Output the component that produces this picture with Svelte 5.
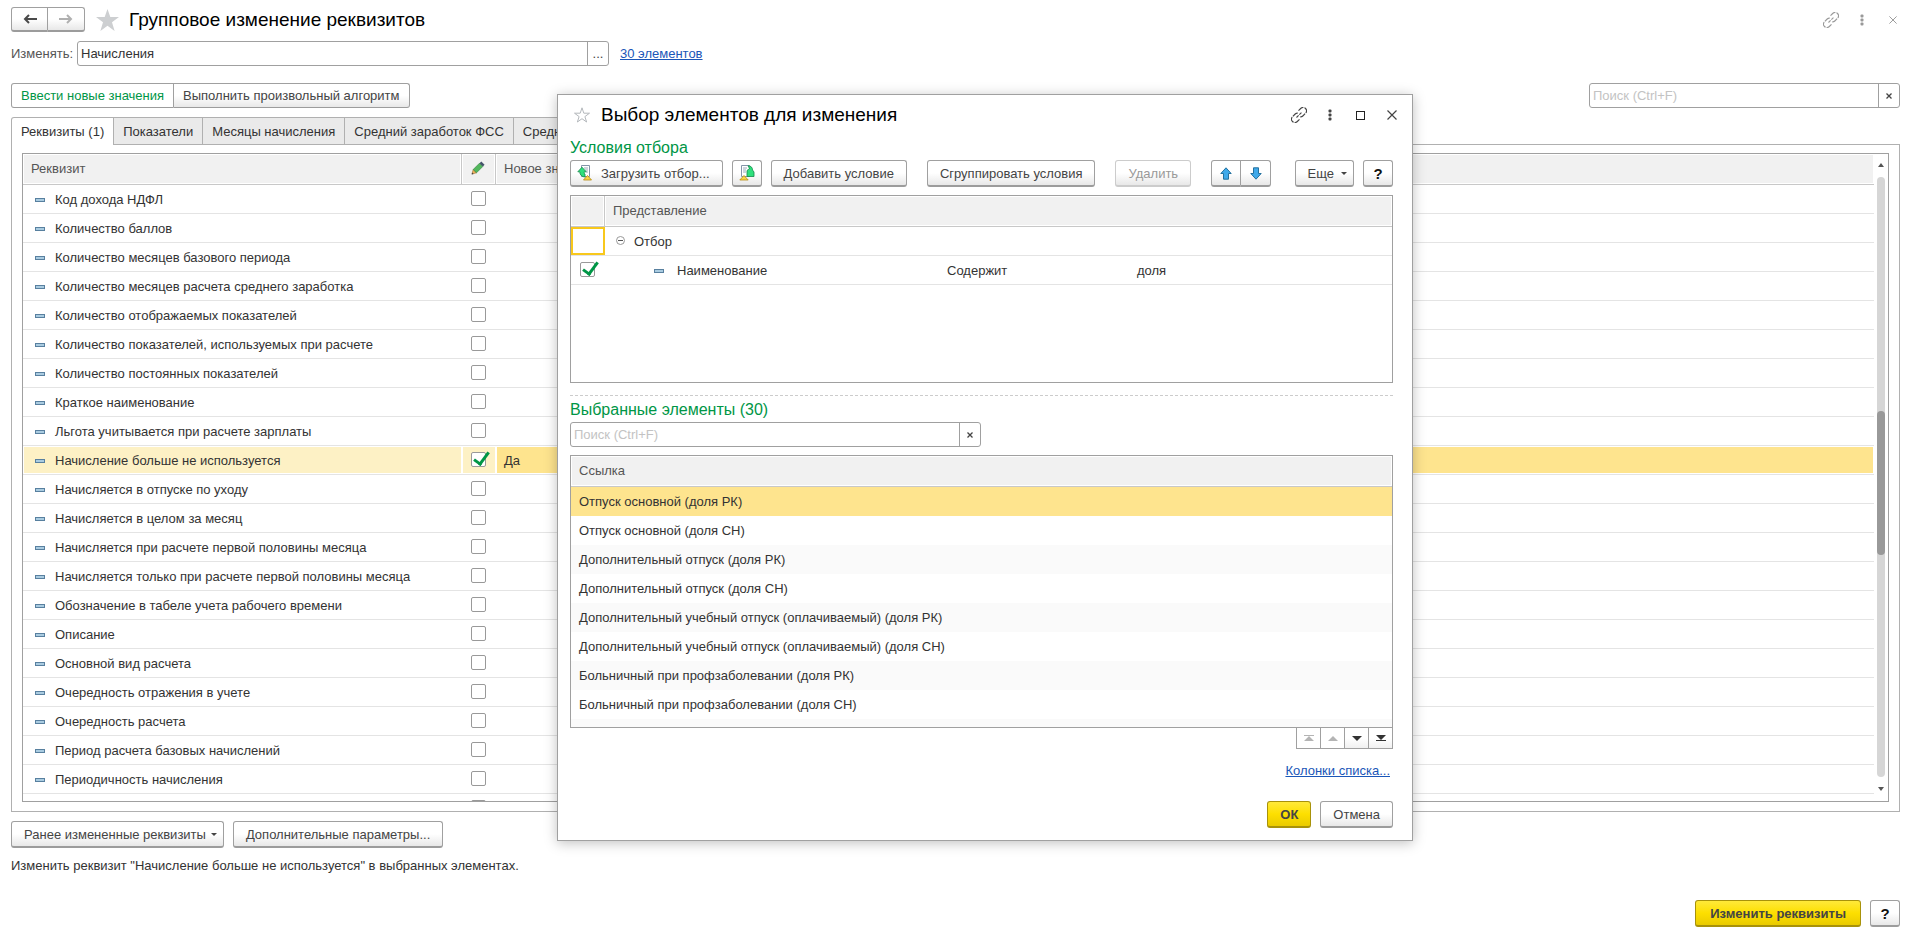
<script>
  let attrs = $state([
    { name: "Код дохода НДФЛ" },
    { name: "Количество баллов" },
    { name: "Количество месяцев базового периода" },
    { name: "Количество месяцев расчета среднего заработка" },
    { name: "Количество отображаемых показателей" },
    { name: "Количество показателей, используемых при расчете" },
    { name: "Количество постоянных показателей" },
    { name: "Краткое наименование" },
    { name: "Льгота учитывается при расчете зарплаты" },
    { name: "Начисление больше не используется", checked: true, value: "Да" },
    { name: "Начисляется в отпуске по уходу" },
    { name: "Начисляется в целом за месяц" },
    { name: "Начисляется при расчете первой половины месяца" },
    { name: "Начисляется только при расчете первой половины месяца" },
    { name: "Обозначение в табеле учета рабочего времени" },
    { name: "Описание" },
    { name: "Основной вид расчета" },
    { name: "Очередность отражения в учете" },
    { name: "Очередность расчета" },
    { name: "Период расчета базовых начислений" },
    { name: "Периодичность начисления" },
    { name: "" },
  ]);

  const tabs = ["Реквизиты (1)", "Показатели", "Месяцы начисления", "Средний заработок ФСС", "Средний заработок"];
  let activeTab = $state(0);

  const items = [
    "Отпуск основной (доля РК)",
    "Отпуск основной (доля СН)",
    "Дополнительный отпуск (доля РК)",
    "Дополнительный отпуск (доля СН)",
    "Дополнительный учебный отпуск (оплачиваемый) (доля РК)",
    "Дополнительный учебный отпуск (оплачиваемый) (доля СН)",
    "Больничный при профзаболевании (доля РК)",
    "Больничный при профзаболевании (доля СН)",
  ];
  let selectedItem = $state(0);
  let object = $state("Начисления");
  let conditionOn = $state(true);
</script>

{#snippet linkIcon()}
  <svg width="16" height="16" viewBox="0 0 16 16" fill="none" stroke="currentColor" stroke-width="1.1">
    <path d="M7.500 3.700 9.700 1.500a3.200 3.200 0 0 1 4.800 4.800l-2.700 2.700a3.200 3.200 0 0 1-2.600.9" stroke-dasharray="6 1" />
    <path d="M8.500 12.300 6.300 14.500A3.200 3.200 0 0 1 1.500 9.700l2.700-2.700a3.200 3.200 0 0 1 2.600-.9" stroke-dasharray="6 1" />
    <path d="M5.500 10.500l5-5" stroke-dasharray="3 1" />
  </svg>
{/snippet}

{#snippet dotsIcon()}
  <svg width="4" height="12" viewBox="0 0 4 12" fill="currentColor">
    <rect x="0.5" y="0.5" width="3" height="3" rx="1" /><rect x="0.5" y="4.5" width="3" height="3" rx="1" /><rect x="0.5" y="8.5" width="3" height="3" rx="1" />
  </svg>
{/snippet}

{#snippet crossIcon(size)}
  <svg width={size} height={size} viewBox="0 0 10 10" fill="none" stroke="currentColor" stroke-width="1.2">
    <path d="M.5.5l9 9M9.5.5l-9 9" />
  </svg>
{/snippet}

{#snippet clearIcon()}
  <svg width="6" height="6" viewBox="0 0 6 6" fill="none" stroke="currentColor" stroke-width="1.3">
    <path d="M.5.5l5 5M5.5.5l-5 5" />
  </svg>
{/snippet}

{#snippet caret()}
  <svg width="6" height="3" viewBox="0 0 6 3" fill="currentColor"><path d="M0 0h6L3 3z" /></svg>
{/snippet}

{#snippet dash()}
  <svg class="dash" width="10" height="4" viewBox="0 0 10 4">
    <rect x=".5" y=".5" width="9" height="3" fill="#a9cbe0" stroke="#58809f" />
  </svg>
{/snippet}

<div class="page">
  <header class="title-row">
    <div class="nav group">
      <button class="btn" aria-label="Назад">
        <svg width="14" height="10" viewBox="0 0 14 10" fill="none" stroke="#4a4a4a" stroke-width="2"><path d="M14 5H2M6 1 2 5l4 4" /></svg>
      </button>
      <button class="btn" aria-label="Вперед">
        <svg width="14" height="10" viewBox="0 0 14 10" fill="none" stroke="#b0b0b0" stroke-width="2"><path d="M0 5h12M8 1l4 4-4 4" /></svg>
      </button>
    </div>
    <svg class="star" width="23" height="22" viewBox="0 0 22 21" fill="#cdcfd1"><path d="M11 0l2.700 7.700H22l-6.700 5 2.500 8.300L11 16l-6.800 5 2.500-8.300L0 7.700h8.300z" /></svg>
    <h1>Групповое изменение реквизитов</h1>
    <div class="window-tools pale">
      <button aria-label="Ссылка">{@render linkIcon()}</button>
      <button aria-label="Меню">{@render dotsIcon()}</button>
      <button aria-label="Закрыть">{@render crossIcon(8)}</button>
    </div>
  </header>

  <div class="object-row">
    <label for="object">Изменять:</label>
    <div class="field object-field">
      <input id="object" type="text" bind:value={object} />
      <button aria-label="Выбрать">...</button>
    </div>
    <a href="#items">30 элементов</a>
  </div>

  <div class="mode-row">
    <div class="group mode">
      <button class="btn active">Ввести новые значения</button>
      <button class="btn">Выполнить произвольный алгоритм</button>
    </div>
    <div class="field search">
      <input type="text" placeholder="Поиск (Ctrl+F)" aria-label="Поиск реквизита" />
      <button aria-label="Очистить">{@render clearIcon()}</button>
    </div>
  </div>

  <div class="tabs" role="tablist">
    {#each tabs as tab, i}
      <button role="tab" class="tab" class:active={activeTab === i} aria-selected={activeTab === i} onclick={() => (activeTab = i)}>{tab}</button>
    {/each}
  </div>

  <div class="panel">
    <div class="grid attrs">
      <div class="grid-body">
        <table>
          <colgroup><col class="c-name" /><col class="c-check" /><col /></colgroup>
          <thead>
            <tr>
              <th>Реквизит</th>
              <th class="center">
                <svg class="pencil" width="14" height="14" viewBox="0 0 14 14">
                  <path d="M1 13l1.200-4.500 3.300 3.300z" fill="#f0b35a" stroke="#a06a2a" stroke-width=".6" />
                  <path d="M2.200 8.500 8.500 2.200l3.300 3.300-6.300 6.300z" fill="#52b85c" stroke="#2e7d3a" stroke-width=".6" />
                  <path d="M8.500 2.200 10.300.4l3.300 3.300-1.800 1.800z" fill="#44546a" />
                  <path d="M.6 13.400l.5-2 1.500 1.500z" fill="#444" />
                </svg>
              </th>
              <th>Новое значение</th>
            </tr>
          </thead>
          <tbody>
            {#each attrs as attr}
              <tr class:selected={attr.value}>
                <td class="attr-name">{@render dash()}{attr.name}</td>
                <td class="center"><input type="checkbox" bind:checked={attr.checked} aria-label={attr.name || "Реквизит"} /></td>
                <td class="attr-value">{attr.value ?? ""}</td>
              </tr>
            {/each}
          </tbody>
        </table>
      </div>
      <div class="scrollbar">
        <svg width="6" height="4" viewBox="0 0 6 4" fill="#555"><path d="M0 4h6L3 0z" /></svg>
        <div class="track"><div class="thumb"></div></div>
        <svg width="6" height="4" viewBox="0 0 6 4" fill="#555"><path d="M0 0h6L3 4z" /></svg>
      </div>
    </div>
  </div>

  <div class="extra-row">
    <button class="btn drop">Ранее измененные реквизиты {@render caret()}</button>
    <button class="btn">Дополнительные параметры...</button>
  </div>
  <p class="summary">Изменить реквизит "Начисление больше не используется" в выбранных элементах.</p>

  <footer>
    <button class="btn primary">Изменить реквизиты</button>
    <button class="btn help">?</button>
  </footer>
</div>

<div class="dialog" role="dialog" aria-labelledby="dialog-title">
  <header class="dialog-head">
    <svg width="16" height="16" viewBox="0 0 16 16" fill="none" stroke="#b4b8bc"><path d="M8 .8l1.800 5.400h5.700l-4.600 3.400 1.700 5.400L8 11.700 3.400 15l1.700-5.400L.5 6.200h5.700z" /></svg>
    <h1 id="dialog-title">Выбор элементов для изменения</h1>
    <div class="window-tools">
      <button aria-label="Ссылка">{@render linkIcon()}</button>
      <button aria-label="Меню">{@render dotsIcon()}</button>
      <button aria-label="Развернуть"><svg width="9" height="9" viewBox="0 0 9 9" fill="none" stroke="#222"><rect x=".5" y=".5" width="8" height="8" /></svg></button>
      <button aria-label="Закрыть">{@render crossIcon(10)}</button>
    </div>
  </header>

  <h2>Условия отбора</h2>
  <div class="toolbar">
    <button class="btn with-icon">
      <svg width="16" height="16" viewBox="0 0 16 16">
        <path d="M4.500.5h8v11h-8z" fill="#fff" stroke="#8494a8" />
        <path d="M7 3h4M8 5h3M9 7h2" stroke="#9aa9ba" />
        <path d="M5 2.200.8 6.800h2c0 3 1.800 5 5.200 5.200V9C7 8.600 7.200 7.800 7.200 6.800h2z" fill="#2fe07c" stroke="#12894a" stroke-width=".8" />
        <path d="M6.500 15 10.500 10.500 14.500 15z" fill="#f7d548" stroke="#b58a10" stroke-width=".8" />
      </svg>
      Загрузить отбор...
    </button>
    <button class="btn icon" aria-label="Сохранить отбор">
      <svg width="16" height="16" viewBox="0 0 16 16">
        <path d="M2.500.5h8v11h-8z" fill="#fff" stroke="#8494a8" />
        <path d="M4 3h4M4 5h3M4 7h3" stroke="#9aa9ba" />
        <path d="M8 11.500V5.500L10.500 3.500 9 .8C12 .8 13.500 2.500 13.500 5L15 7v4.500z" fill="#2fe07c" stroke="#12894a" stroke-width=".8" />
        <path d="M.8 15 5 10.500 9.200 15z" fill="#f7d548" stroke="#b58a10" stroke-width=".8" />
      </svg>
    </button>
    <button class="btn">Добавить условие</button>
    <button class="btn spaced">Сгруппировать условия</button>
    <button class="btn spaced" disabled>Удалить</button>
    <div class="group arrows spaced">
      <button class="btn" aria-label="Вверх"><svg width="12" height="13" viewBox="0 0 12 13"><path d="M6 .8 11.200 6.500H8.500v5.700h-5V6.500H.8z" fill="#3fa9ea" stroke="#24719f" /></svg></button>
      <button class="btn" aria-label="Вниз"><svg width="12" height="13" viewBox="0 0 12 13"><path d="M6 12.200.8 6.500h2.700V.8h5v5.700h2.700z" fill="#3fa9ea" stroke="#24719f" /></svg></button>
    </div>
    <button class="btn drop more">Еще {@render caret()}</button>
    <button class="btn help">?</button>
  </div>

  <div class="grid conditions">
    <table>
      <colgroup><col class="k-check" /><col class="k-name" /><col class="k-op" /><col /></colgroup>
      <thead>
        <tr><th></th><th colspan="3">Представление</th></tr>
      </thead>
      <tbody>
        <tr>
          <td class="focused"></td>
          <td colspan="3" class="root">
            <svg width="9" height="9" viewBox="0 0 9 9" fill="none" stroke="#999"><circle cx="4.5" cy="4.5" r="4" /><path d="M2 4.500h5" stroke="#555" /></svg>Отбор
          </td>
        </tr>
        <tr>
          <td class="center"><input type="checkbox" bind:checked={conditionOn} aria-label="Использовать условие" /></td>
          <td class="leaf">{@render dash()}Наименование</td>
          <td>Содержит</td>
          <td>доля</td>
        </tr>
      </tbody>
    </table>
  </div>

  <hr />

  <h2>Выбранные элементы (30)</h2>
  <div class="field search">
    <input type="text" placeholder="Поиск (Ctrl+F)" aria-label="Поиск элемента" />
    <button aria-label="Очистить">{@render clearIcon()}</button>
  </div>

  <div class="grid items" id="items">
    <table>
      <thead>
        <tr><th>Ссылка</th></tr>
      </thead>
      <tbody>
        {#each items as item, i}
          <tr class:current={selectedItem === i} onclick={() => (selectedItem = i)}><td>{item}</td></tr>
        {/each}
        <tr><td></td></tr>
      </tbody>
    </table>
  </div>
  <div class="pager">
    <button disabled aria-label="В начало"><svg width="10" height="6" viewBox="0 0 10 6" fill="currentColor"><path d="M0 0h10v1H0zM5 1l5 5H0z" /></svg></button>
    <button disabled aria-label="Назад"><svg width="10" height="5" viewBox="0 0 10 5" fill="currentColor"><path d="M5 0l5 5H0z" /></svg></button>
    <button aria-label="Дальше"><svg width="10" height="5" viewBox="0 0 10 5" fill="currentColor"><path d="M0 0h10L5 5z" /></svg></button>
    <button aria-label="В конец"><svg width="10" height="6" viewBox="0 0 10 6" fill="currentColor"><path d="M0 0h10L5 5zM0 5h10v1H0z" /></svg></button>
  </div>

  <a class="columns-link" href="#columns">Колонки списка...</a>

  <div class="actions">
    <button class="btn primary">ОК</button>
    <button class="btn">Отмена</button>
  </div>
</div>

<style>
  :global(body) {
    background: #fff;
  }
  .page,
  .dialog {
    box-sizing: border-box;
    font-family: "Liberation Sans", Arial, sans-serif;
    font-size: 13px;
    line-height: 15px;
    color: #333;
  }
  .page *,
  .dialog * {
    box-sizing: border-box;
  }
  .page {
    display: flex;
    flex-direction: column;
    height: 100vh;
    padding: 7px 15px 12px 11px;
  }
  button,
  input {
    font: inherit;
    color: inherit;
    margin: 0;
  }
  svg {
    display: block;
    flex: none;
  }
  h1 {
    margin: 0;
    font-size: 19px;
    line-height: 24px;
    font-weight: 400;
    color: #000;
  }
  h2 {
    margin: 0;
    font-size: 16px;
    line-height: 20px;
    font-weight: 400;
    color: #009646;
  }
  a {
    color: #1a56b8;
  }

  .btn {
    display: inline-flex;
    align-items: center;
    justify-content: center;
    height: 27px;
    padding: 0 12px;
    border: 1px solid #a0a0a0;
    border-bottom: 2px solid #9c9c9c;
    border-radius: 3px;
    background: linear-gradient(#fff 50%, #e8e8e8);
    color: #444;
    white-space: nowrap;
  }
  .btn:disabled {
    color: #999;
    border-color: #ccc;
  }
  .btn.primary {
    border-color: #a8920a;
    background: linear-gradient(#ffe93a, #fddf00 50%, #eacb00);
    font-weight: 700;
  }
  .btn.drop {
    gap: 5px;
    padding-right: 6px;
  }
  .btn.help {
    width: 30px;
    padding: 0;
    font-size: 15px;
    font-weight: 700;
    color: #111;
  }
  .group {
    display: flex;
  }
  .group .btn:first-child {
    border-radius: 3px 0 0 3px;
  }
  .group .btn:last-child {
    border-left: 0;
    border-radius: 0 3px 3px 0;
  }

  .field {
    display: flex;
    height: 25px;
    border: 1px solid #a0a0a0;
    border-radius: 3px;
    background: #fff;
  }
  .field input {
    flex: 1;
    min-width: 0;
    padding: 0 3px;
    border: 0;
    outline: 0;
    background: none;
  }
  .field input::placeholder {
    color: #c3c3c3;
    opacity: 1;
  }
  .field button {
    display: flex;
    align-items: center;
    justify-content: center;
    width: 21px;
    padding: 0;
    border: 0;
    border-left: 1px solid #a0a0a0;
    background: none;
    color: #444;
  }

  .title-row,
  .dialog-head {
    display: flex;
    align-items: center;
  }
  .nav .btn {
    width: 37px;
    height: 25px;
    padding: 0;
  }
  .star {
    margin: 0 10px 0 11px;
  }
  .window-tools {
    display: flex;
    margin-left: auto;
    color: #444;
  }
  .window-tools button {
    display: flex;
    align-items: center;
    justify-content: center;
    width: 31px;
    height: 24px;
    padding: 0;
    border: 0;
    background: none;
  }
  .window-tools.pale {
    color: #999;
    margin-right: -8px;
  }

  .object-row {
    display: flex;
    align-items: center;
    margin-top: 9px;
  }
  .object-row label {
    width: 66px;
    color: #555;
  }
  .object-field {
    width: 532px;
    margin-right: 11px;
  }
  .mode-row {
    display: flex;
    justify-content: space-between;
    margin-top: 17px;
  }
  .mode-row .btn {
    height: 25px;
    padding: 0 9px;
    border-bottom-width: 1px;
  }
  .mode-row .active {
    background: #fff;
    color: #009646;
  }
  .mode-row .search {
    width: 311px;
  }

  .tabs {
    display: flex;
    margin-top: 9px;
  }
  .tab {
    height: 27px;
    padding: 0 9px;
    border: 1px solid #b0b0b0;
    border-width: 1px 1px 0 0;
    background: #eaeaea;
    white-space: nowrap;
  }
  .tab:first-child {
    border-left-width: 1px;
    border-radius: 3px 0 0 0;
  }
  .tab.active {
    position: relative;
    height: 28px;
    margin-bottom: -1px;
    background: #fff;
  }
  .panel {
    display: flex;
    flex: 1;
    min-height: 0;
    padding: 8px 10px 9px;
    border: 1px solid #b0b0b0;
  }

  .grid {
    border: 1px solid #a0a0a0;
    overflow: hidden;
  }
  table {
    width: 100%;
    border-collapse: separate;
    border-spacing: 0;
    table-layout: fixed;
  }
  th {
    height: 31px;
    padding: 0 8px 2px;
    border-bottom: 1px solid #c8c8c8;
    border-right: 1px solid #c8c8c8;
    background: #f1f1f1;
    box-shadow: inset 0 0 0 1px #fff;
    color: #555;
    font-weight: 400;
    text-align: left;
  }
  th:last-child {
    border-right: 0;
  }
  td {
    height: 29px;
    padding: 0 8px;
    border-bottom: 1px solid #e4e4e4;
    white-space: nowrap;
  }
  .center {
    padding: 0 1px 2px 0;
    text-align: center;
  }
  .dash {
    display: inline-block;
    margin-right: 10px;
    vertical-align: 2px;
  }
  .pencil {
    margin: 0 auto;
  }
  input[type="checkbox"] {
    appearance: none;
    display: block;
    width: 15px;
    height: 15px;
    margin: 0 auto;
    border: 1px solid #999;
    border-radius: 2px;
    background: #fff;
    position: relative;
  }
  input[type="checkbox"]:checked::after {
    content: "";
    position: absolute;
    left: 5px;
    top: -4px;
    width: 6px;
    height: 13px;
    border: solid #009646;
    border-width: 0 3px 3px 0;
    transform: rotate(36deg);
  }

  .attrs {
    display: flex;
    flex: 1;
  }
  .grid-body {
    flex: 1;
    min-width: 0;
  }
  .c-name {
    width: 439px;
  }
  .c-check {
    width: 34px;
  }
  .attr-name {
    padding-left: 12px;
  }
  .selected td {
    background: #fdf1c5;
    box-shadow: inset 0 0 0 1px #fff;
  }
  .selected .attr-value {
    background: #fee48e;
  }
  .scrollbar {
    display: flex;
    flex-direction: column;
    align-items: center;
    gap: 10px;
    width: 14px;
    padding: 9px 0 10px;
  }
  .track {
    flex: 1;
    width: 8px;
    border-radius: 4px;
    background: #d6d6d6;
  }
  .thumb {
    position: relative;
    top: 39%;
    height: 24%;
    border-radius: 4px;
    background: #999;
  }

  .extra-row {
    display: flex;
    gap: 9px;
    margin-top: 9px;
  }
  .summary {
    margin: 10px 0 27px;
  }
  footer {
    display: flex;
    justify-content: flex-end;
    gap: 9px;
  }
  footer .primary {
    padding: 0 14px;
  }

  .dialog {
    position: absolute;
    left: 557px;
    top: 94px;
    width: 856px;
    padding: 8px 19px 12px 12px;
    border: 1px solid #a0a0a0;
    background: #fff;
    box-shadow: 0 2px 12px rgba(0, 0, 0, 0.25);
  }
  .dialog-head {
    gap: 11px;
    padding-left: 4px;
    margin-bottom: 11px;
  }
  .dialog-head .window-tools {
    margin-right: -14px;
  }
  .toolbar {
    display: flex;
    gap: 9px;
    margin-top: 2px;
  }
  .toolbar .spaced {
    margin-left: 11px;
  }
  .toolbar .more {
    gap: 7px;
    margin-left: auto;
  }
  .with-icon {
    gap: 8px;
    padding-left: 6px;
  }
  .icon {
    width: 30px;
    padding: 0;
  }
  .arrows .btn {
    width: 30px;
    padding: 0;
  }
  .conditions {
    height: 188px;
    margin-top: 8px;
  }
  .k-check {
    width: 34px;
  }
  .k-name {
    width: 334px;
  }
  .k-op {
    width: 190px;
  }
  .focused {
    box-shadow: inset 0 0 0 2px #f8c81c;
  }
  .root svg {
    display: inline-block;
    margin: 0 9px 0 3px;
    vertical-align: 1px;
  }
  .leaf {
    padding-left: 49px;
  }
  .leaf .dash {
    margin-right: 13px;
  }
  hr {
    margin: 12px 0 4px;
    border: 0;
    border-top: 1px dashed #ccc;
  }
  .dialog .search {
    width: 411px;
    margin-top: 2px;
  }
  .items {
    height: 273px;
    margin-top: 8px;
  }
  .items td {
    border-bottom: 0;
  }
  .items tr:nth-child(odd) td {
    background: #fafafa;
  }
  .items tr.current td {
    background: #fee48e;
  }
  .pager {
    display: flex;
    justify-content: flex-end;
    margin-top: -1px;
  }
  .pager button {
    display: flex;
    align-items: center;
    justify-content: center;
    width: 25px;
    height: 22px;
    margin-left: -1px;
    padding: 0;
    border: 1px solid #a0a0a0;
    background: linear-gradient(#fff 50%, #f0f0f0);
    color: #333;
  }
  .pager button:disabled {
    background: #fff;
    color: #b4b4b4;
  }
  .columns-link {
    display: block;
    width: fit-content;
    margin: 14px 3px 0 auto;
  }
  .actions {
    display: flex;
    justify-content: flex-end;
    gap: 9px;
    margin-top: 23px;
  }
</style>
